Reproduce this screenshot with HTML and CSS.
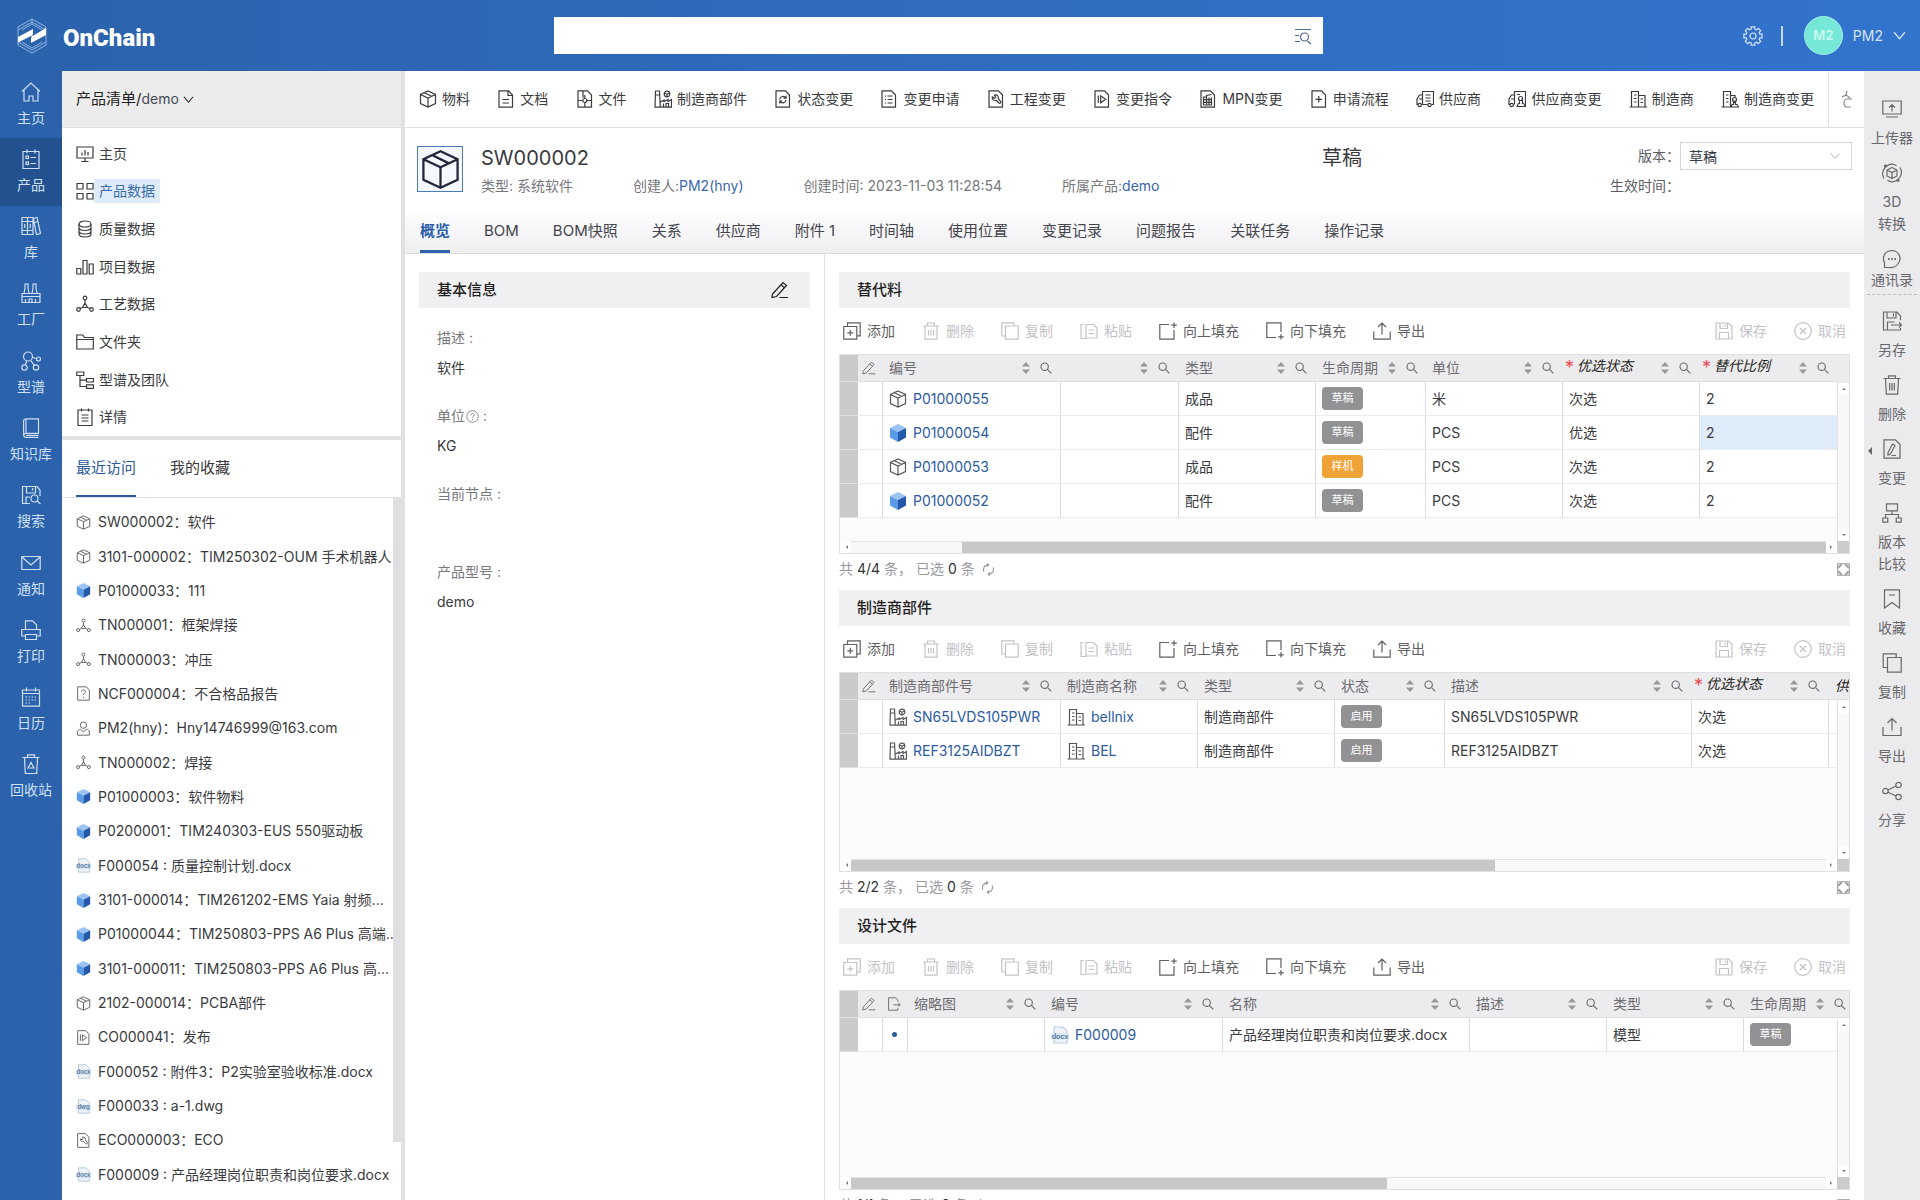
FILE: index.html
```html
<!DOCTYPE html>
<html lang="zh-CN">

<head>
  <meta charset="UTF-8" />
  <meta name="viewport" content="width=device-width, initial-scale=1.0" />
  <title>OnChain</title>
  <link rel="stylesheet" href="styles.css">
</head>

<body>
  <!-- 图标 -->
  <svg class="sprite" aria-hidden="true">
    <!-- 左侧主导航 -->
    <symbol id="i-home" viewBox="0 0 20 20"><path d="M1 9.500 10 1l9 8.500M3 8v11h5v-5h4v5h5V8" /></symbol>
    <symbol id="i-product" viewBox="0 0 20 20"><path d="M2 2.500h16v17H2zM6 .5v4M14 .5v4M9.500 8.500H15M9.500 14.500H15" /><rect x="5" y="7" width="2.500" height="2.500" /><rect x="5" y="13" width="2.500" height="2.500" /></symbol>
    <symbol id="i-books" viewBox="0 0 20 20"><path d="M1 1.500h5.500v17H1zM6.500 1.500H12v17H6.500zM12.300 2.500l3.700-1 3.500 16-4 1zM1 5.500h11M1 14.500h11M3.700 8v4M9.200 8v4M13.500 6.500l3.500-1" /></symbol>
    <symbol id="i-factory" viewBox="0 0 20 20"><path d="M1 10.500h18v9H1zM3 10.500 4 5V1h3v4l1 5.500M11 10.500 12 5V1h3v4l1 5.500M1 13.500h18M4.500 19.500v-3.500M8 19.500v-3.500h3v3.500M14.500 19.500v-3.500" /></symbol>
    <symbol id="i-genealogy" viewBox="0 0 20 20"><circle cx="7" cy="5.500" r="4.500" /><circle cx="17.500" cy="8" r="2" /><circle cx="3.500" cy="16.500" r="2.700" /><circle cx="15" cy="16.500" r="2.700" /><path d="m11.500 6.500 4 1M5.700 9.800l-1.300 4M9.500 9.300l4 5" /></symbol>
    <symbol id="i-book" viewBox="0 0 20 20"><path d="M5 .8h12.500v14.500H5c-3 0-3 4 0 4h12.500M2.600 17V3c0-1.500 1-2.200 2.400-2.200v14.500M5 17.300h12.500" /></symbol>
    <symbol id="i-findsave" viewBox="0 0 20 20"><path d="M9 18.500H1.500v-17H16L19 5v6M5.500 1.500V8h9V1.500M11.500 3v2.500M5 18.500v-6.500h4" /><circle cx="13.500" cy="13.500" r="3.500" /><path d="m16 16 3.500 3" /></symbol>
    <symbol id="i-mail" viewBox="0 0 20 20"><path d="M.8 3.500h18.400v13H.8zM1 4l9 8 9-8" /></symbol>
    <symbol id="i-print" viewBox="0 0 20 20"><path d="M4.500 9V.8h7l4 4V9M4 16H.8V9.500h18.400V16H16M4.500 14.500h11v5h-11z" /></symbol>
    <symbol id="i-calendar" viewBox="0 0 20 20"><path d="M1.500 3h17v16.200h-17zM1.500 6.500h17M5.500 .5v4M14.500 .5v4" /><path d="M4.500 10h11M4.500 13h11M4.500 16h6" stroke-dasharray="1.500 1.500" /></symbol>
    <symbol id="i-recycle" viewBox="0 0 20 20"><path d="M1.500 3.500h17M6.500 3.500V.8h7v2.700M3.500 3.500l.8 16h11.400l.8-16M10 8.500l3 5.500H7z" /></symbol>

    <!-- 目录树 -->
    <symbol id="i-board" viewBox="0 0 18 18"><path d="M1 2h16v11H1zM9 13v3.500M5.500 16.500h7M6 7.500v3M9 5v5.500M12 7v3.500" /></symbol>
    <symbol id="i-grid" viewBox="0 0 18 18"><path d="M1 1.500h6v5.500H1zM11 1.500h6v5.500h-6zM1 11.500h6V17H1zM11 11.500h6V17h-6z" /></symbol>
    <symbol id="i-db" viewBox="0 0 18 18"><ellipse cx="9" cy="4" rx="6" ry="3" /><path d="M3 4v10c0 4 12 4 12 0V4M3 7.500c0 4 12 4 12 0M3 11c0 4 12 4 12 0" /></symbol>
    <symbol id="i-bars" viewBox="0 0 18 18"><path d="M.8 10.500h4v5.500h-4zM7 2.500h4V16H7zM13.200 6h4v10h-4z" /></symbol>
    <symbol id="i-process" viewBox="0 0 18 18"><circle cx="9" cy="3" r="1.800" /><circle cx="2.500" cy="14.500" r="1.800" /><circle cx="15.500" cy="14.500" r="1.800" /><path d="M9 5v4M6.500 12.500 9 8l2.500 4.500zM6.500 12.500 4 13.500M11.500 12.500l2.500 1" /></symbol>
    <symbol id="i-folder" viewBox="0 0 18 18"><path d="M.8 16V2h6l1.500 2.500h9V16zM.8 6.500h16.400" /></symbol>
    <symbol id="i-hierarchy" viewBox="0 0 18 18"><path d="M.8 1h7v3.500h-7zM10.500 7.500h7V11h-7zM10.500 13.800h7v3.500h-7zM4 4.500v11h6.500M4 9.200h6.500" /></symbol>
    <symbol id="i-note" viewBox="0 0 18 18"><path d="M2 2h14v15.500H2zM5.500 .5v3M12.500 .5v3M5.500 7h7M5.500 10h7M5.500 13h7" /></symbol>

    <!-- 对象类型 -->
    <symbol id="i-cube" viewBox="0 0 18 18"><path d="M9 1 16.500 4.500v9L9 17l-7.500-3.500v-9zM1.500 4.500 9 8l7.500-3.500M9 8v9M5.500 2.700l7 3.500" /></symbol>
    <symbol id="i-blue" viewBox="0 0 18 18">
      <g stroke="none">
        <path d="M9 0 17 4 9 8 1 4z" fill="#9cc4f2" />
        <path d="M1 4 9 8v10l-8-4.500z" fill="#5a9be8" />
        <path d="M17 4 9 8v10l8-4.500z" fill="#2358ab" />
      </g>
    </symbol>
    <symbol id="i-ncf" viewBox="0 0 18 18"><path d="M2 1h10l4 3.500V17H2zM6.700 7c0-3 4.600-3 4.600-.3 0 2-2.300 1.800-2.300 4.300M9 13v1.500" /></symbol>
    <symbol id="i-user" viewBox="0 0 18 18"><circle cx="9" cy="5" r="3.800" /><path d="M2 17v-4c0-2 2-3 3.500-3L9 13l3.500-3c1.500 0 3.500 1 3.500 3v4z" /></symbol>
    <symbol id="i-docx" viewBox="0 0 18 18">
      <path d="M3 1h9l4 4v12H3z" fill="#eef3f8" stroke="#b9cbdc" />
      <rect x="0" y="7" width="18" height="6.500" fill="#dbe6f0" stroke="none" />
      <text x="9" y="12.500" class="ext">docx</text>
    </symbol>
    <symbol id="i-dwg" viewBox="0 0 18 18">
      <path d="M3 1h9l4 4v12H3z" fill="#eef3f8" stroke="#b9cbdc" />
      <rect x="0" y="7" width="18" height="6.500" fill="#dbe6f0" stroke="none" />
      <text x="9" y="12" class="ext">dwg</text>
    </symbol>

    <!-- 新建工具栏 -->
    <symbol id="i-doc" viewBox="0 0 18 18"><path d="M2 .8h9.500L15.500 5v12.200H2zM11 .8V5.500h4.500M5.500 9.500h6.500M5.500 13h6.500" /></symbol>
    <symbol id="i-file" viewBox="0 0 18 18"><path d="M2 .8h9.500L15.500 5v12.200H2zM7 .8v7M2 10.500h4.500M11 10.500h4.500M8.800 12.700v4.500M8.800 5v3.500" /><circle cx="8.800" cy="10.500" r="2" /></symbol>
    <symbol id="i-mpart" viewBox="0 0 18 18"><path d="M1 17.200 1.500 1h4l.8 16.200zM1.500 5h4M6 17.200h11.500V9.500L14 11.500v-2l-4 2v-1.500l-3.500 2M9.500 17v-3.500M12 17v-3.500h2.500V17" /><circle cx="13" cy="4" r="2.800" /><path d="m10.500 3 2.500 1.200 2.500-1.200M13 4.200v2.600" /></symbol>
    <symbol id="i-state" viewBox="0 0 18 18"><path d="M2 .8h9.500L15.500 5v12.200H2z" /><path d="M5.700 9.500c.3-3.500 4.500-4 6-1.500M12 9.800c-.3 3.500-4.500 4-6 1.500M12 5.800V8.200H9.500M5.700 13.500v-2.300h2.500" /></symbol>
    <symbol id="i-list" viewBox="0 0 18 18"><path d="M2 .8h9.500L15.500 5v12.200H2zM7.500 6h5M7.500 9.500h5M7.500 13h5M4.800 6h1.200M4.800 9.500h1.200M4.800 13h1.200" /></symbol>
    <symbol id="i-wrench" viewBox="0 0 18 18"><path d="M2 .8h9.500L15.500 5v12.200H2z" /><path d="M7.500 5c2.500-.8 4.500 1.500 3.700 3.500l2.500 3c.6 1.300-.8 2.300-1.800 1.500L9.300 10.300C7 11 4.800 9.500 5.300 7l2 1.300 1.300-1.200z" /></symbol>
    <symbol id="i-play" viewBox="0 0 18 18"><path d="M2 .8h9.500L15.500 5v12.200H2zM5.300 5.500v7.500M7.700 5.800v7l5-3.500z" /></symbol>
    <symbol id="i-mpn" viewBox="0 0 18 18"><path d="M2 .8h9.500L15.500 5v12.200H2zM4.500 15V7l3 0M7.500 15V5.500l5-1M12.500 7.500V15M4.500 15h8.500M4.500 9.700h8M4.500 12.300h8M10 7.500V15" /></symbol>
    <symbol id="i-newdoc" viewBox="0 0 18 18"><path d="M2 .8h9.500L15.500 5v12.200H2zM8.800 6v6.500M5.500 9.300h6.500" /></symbol>
    <symbol id="i-truck" viewBox="0 0 18 18"><path d="M6.500 14.500V1.500h11v13h-2M11.500 14.500H6M6.500 5H3.500L1 9v5.500h1M3 9h3.500M9.500 5h5M9.500 8h5M9.500 11h5" /><circle cx="3.700" cy="15" r="1.700" /><circle cx="13.500" cy="15" r="1.700" /></symbol>
    <symbol id="i-truckedit" viewBox="0 0 18 18"><path d="M6.500 14.500V1.500h11v15M6.500 5H3.500L1 9v5.500h1M3 9h3.500M9 4.500h3" /><circle cx="3.700" cy="15" r="1.700" /><circle cx="12.500" cy="8.500" r="2" /><path d="M9 16.500h8.500l-2-3h-1v-3h-3v3h-1z" /></symbol>
    <symbol id="i-building" viewBox="0 0 18 18"><path d="M2.500 17V1.500h7V17M9.500 5.500H16V17M.5 17h17.500M5 5h2.500M5 8.500h2.500M5 12h2.500M11.500 9h2.500M11.500 12.500h2.500" /></symbol>
    <symbol id="i-buildingedit" viewBox="0 0 18 18"><path d="M2.500 17V1.500h7V17M9.500 5.500H14V7M.5 17h9M5 5h2.500M5 8.500h2.500M5 12h2.500" /><circle cx="13.500" cy="9.500" r="2" /><path d="M10 17h7.500l-1.500-2.500h-1.500v-2h-2v2H11z" /></symbol>
    <symbol id="i-more" viewBox="0 0 18 18"><path d="M10 1 9 5 5 7M9 5l4 3M15 9h-5c-4 0-4 8 0 8h4" /></symbol>

    <!-- 表格操作 -->
    <symbol id="i-add" viewBox="0 0 18 18"><path d="M.8 4.500h13v12.700H.8zM4.500 4.500V.8h12.700v13h-3.400M7.300 7.800v6M4.300 10.800h6" /></symbol>
    <symbol id="i-trash" viewBox="0 0 18 18"><path d="M1 4h16M5.500 4V1h7v3M3 4v13.200h12V4M6.500 8v5.500M9 8v5.500M11.500 8v5.500" /></symbol>
    <symbol id="i-copy" viewBox="0 0 18 18"><path d="M4.500 4h12.700v13.200H4.500zM4.500 14H.8V.8H13V4" /></symbol>
    <symbol id="i-paste" viewBox="0 0 18 18"><path d="M6 2.500h7.500L17 6v10H6zM6 16.500H1v-14h2.500M8.500 8h5.500M8.500 11.500h5.500" /></symbol>
    <symbol id="i-fillup" viewBox="0 0 18 18"><path d="M10 2.500H.8v14.700H15V8M15 .5v5.500M12.300 3.200h5.500" /></symbol>
    <symbol id="i-filldown" viewBox="0 0 18 18"><path d="M10 15.500H.8V.8H15V10M15 12v5.500M12.300 14.800h5.500" /></symbol>
    <symbol id="i-export" viewBox="0 0 18 18"><path d="M.8 9.500v7.700h16.400V9.500M9 12.500V1.200M5 5l4-4 4 4" /></symbol>
    <symbol id="i-save" viewBox="0 0 18 18"><path d="M1 1h12.500L17 4.500V17H1zM5 1v5.500h7.500V1M4.500 17v-6.500h9V17M10 2.500V5" /></symbol>
    <symbol id="i-cancel" viewBox="0 0 18 18"><circle cx="9" cy="9" r="8.300" /><path d="m6 6 6 6M12 6l-6 6" /></symbol>
    <symbol id="i-edit" viewBox="0 0 18 18"><path d="M1.500 13 12 1.500l3.500 3L5.500 15.500 1 16.500zM10 3.700l3.500 3M8.500 16.500H17" /></symbol>
    <symbol id="i-out" viewBox="0 0 18 18"><path d="M14 6V4l-3-3H2v16h12v-3M8 10h9M14.500 7.500 17 10l-2.500 2.500" /></symbol>
    <symbol id="i-sort" viewBox="0 0 8 14"><path d="M4 1 8 5.500H0zM4 13l4-4.500H0z" fill="#98979a" stroke="none" /></symbol>
    <symbol id="i-search" viewBox="0 0 18 18"><circle cx="7" cy="7" r="5.500" stroke-width="1.700" /><path d="m11 11 6 6" stroke-width="1.700" /></symbol>
    <symbol id="i-refresh" viewBox="0 0 18 18"><path d="M2.500 12C1 6 4 2.500 9 2.500M15.500 6c1.500 6-1.500 9.500-6.500 9.500M7 .5l2.300 2L7 5M11 13l-2.300 2.500L11 17.500" stroke-width="1.600" /></symbol>
    <symbol id="i-expand" viewBox="0 0 14 14"><path d="M.8 .8h12.400v12.400H.8z" /><path d="M1.500 5 5 1.500M9 1.500 12.500 5M12.500 9 9 12.500M5 12.500 1.500 9" stroke-width="2" /></symbol>
    <symbol id="i-help" viewBox="0 0 18 18"><circle cx="9" cy="9" r="8" /><path d="M6.700 7.500c0-3.500 4.600-3.300 4.600-.5C11.300 9 9 8.700 9 10.800M9 12.500V14" /></symbol>
    <symbol id="i-down" viewBox="0 0 12 12"><path d="m1 3 5 6 5-6" /></symbol>

    <!-- 右侧操作栏 -->
    <symbol id="i-upload" viewBox="0 0 20 20"><path d="M.8 2h18.400v13H.8zM4 18h12M10 12.500V6M7 8.500 10 5.500l3 3" /></symbol>
    <symbol id="i-3d" viewBox="0 0 20 20"><path d="m10 4.500 5 2.500v6l-5 2.500L5 13V7zM5 7l5 2.500L15 7M10 9.500v6M2 15.500c-2.500-4-1.500-9 2-12 3.500-2.800 7.500-2.800 10.500-.8M18 4.500c2.500 4 1.500 9-2 12-3.500 2.800-7.500 2.800-10.500.8" /><circle cx="3.500" cy="3" r="1" fill="currentColor" /><circle cx="16" cy="17.300" r="1" fill="currentColor" /></symbol>
    <symbol id="i-chat" viewBox="0 0 20 20"><path d="M2.500 18.500v-5C0 9 2 2 9.500 1.500 17 1.500 20 9 16.500 14c-2 3.500-6 5-9 4.500z" /><path d="M6 10h1.500M9.200 10h1.500M12.400 10h1.500" stroke-width="2" /></symbol>
    <symbol id="i-saveas" viewBox="0 0 20 20"><path d="M18.500 9V5L15 1H1.500v18h17v-2M5 1v6h9V1M11.500 2.500v3M5.500 19v-8h7M9 14h10.500M17 11.500l2.500 2.500-2.500 2.500" /></symbol>
    <symbol id="i-trash2" viewBox="0 0 20 20"><path d="M1.500 3.500h17M6.500 3.500V.8h7v2.700M3.500 3.500l.8 15.700h11.400l.8-15.700M7.700 8v7.500M10 8v7.500M12.300 8v7.500" /></symbol>
    <symbol id="i-change" viewBox="0 0 20 20"><path d="M2 .8h11.500L18 5.500v13.700H2zM6 13.500 10.500 5l2.500 1.500L8.500 15 6 16zM9.500 16.500H14" /></symbol>
    <symbol id="i-compare" viewBox="0 0 20 20"><path d="M4.500 .8h11v7h-11zM.8 15h5v4.200h-5zM14.200 15h5v4.200h-5zM10 8v3.500M3.500 15v-3.500h13V15" /></symbol>
    <symbol id="i-mark" viewBox="0 0 20 20"><path d="M2.500 .8h15v18.200L10 13.500 2.500 19zM7 6h6" /></symbol>
    <symbol id="i-copy2" viewBox="0 0 20 20"><path d="M5.500 4.500h13.700v14.700H5.500zM5.500 14.500H1.200V.8h13v3.700" /></symbol>
    <symbol id="i-export2" viewBox="0 0 20 20"><path d="M1 10v8.500h18V10M10 13.500V1.500M5.500 6 10 1.500 14.500 6" /></symbol>
    <symbol id="i-share" viewBox="0 0 20 20"><circle cx="3.500" cy="10" r="2.700" /><circle cx="16.500" cy="4" r="2.700" /><circle cx="16.500" cy="16" r="2.700" /><path d="m6 9 8-4M6 11.200l8 3.800" /></symbol>
  </svg>

  <header class="header">
    <div class="brand">
      <svg class="brand-logo" viewBox="0 0 30 36" aria-hidden="true">
        <path d="M15 1 29 9v18l-14 8L1 27V9zM15 6l10 6M15 6 5 12M15 30l10-6M15 30 5 24M15 1v5M1 12l14-8 14 8M1 24l14 8 14-8" fill="none" stroke="#8fb4e3" stroke-width="1" />
        <path d="M1 19 16 11v5l-2 3 15-9v7l-15 8v-5l2-3-15 7.500z" fill="#fff" stroke="none" />
      </svg>
      <span class="brand-name">OnChain</span>
    </div>
    <form class="search">
      <input class="search-input" type="text" aria-label="搜索">
      <button class="search-btn" type="button" aria-label="高级搜索">
        <svg viewBox="0 0 18 18"><path d="M1 2.500h16M1 8.500h4M1 14.500h5M13.500 14l3.500 3" /><circle cx="10.500" cy="10" r="4" /></svg>
      </button>
    </form>
    <div class="account">
      <button class="gear" type="button" aria-label="设置">
        <svg viewBox="0 0 20 20"><circle cx="10" cy="10" r="3" /><path d="M8.200 3.200V.9h3.600v2.300l1.700.7 1.700-1.600 2.500 2.500-1.600 1.700.7 1.700h2.300v3.600h-2.300l-.7 1.700 1.600 1.700-2.500 2.500-1.700-1.600-1.700.7v2.300H8.200v-2.300l-1.700-.7-1.700 1.600-2.500-2.500 1.600-1.700-.7-1.700H.9V8.200h2.300l.7-1.700-1.600-1.700 2.500-2.500 1.700 1.600z" /></svg>
      </button>
      <span class="account-line"></span>
      <span class="avatar">M2</span>
      <button class="account-name" type="button">PM2 <svg viewBox="0 0 12 12"><use href="#i-down" /></svg></button>
    </div>
  </header>

  <div class="page">
    <nav class="nav">
      <div class="nav-list">
        <a href="#"><svg><use href="#i-home" /></svg>主页</a>
        <a href="#" class="active"><svg><use href="#i-product" /></svg>产品</a>
        <a href="#"><svg><use href="#i-books" /></svg>库</a>
        <a href="#"><svg><use href="#i-factory" /></svg>工厂</a>
        <a href="#"><svg><use href="#i-genealogy" /></svg>型谱</a>
        <a href="#"><svg><use href="#i-book" /></svg>知识库</a>
        <a href="#"><svg><use href="#i-findsave" /></svg>搜索</a>
        <a href="#"><svg><use href="#i-mail" /></svg>通知</a>
        <a href="#"><svg><use href="#i-print" /></svg>打印</a>
        <a href="#"><svg><use href="#i-calendar" /></svg>日历</a>
        <a href="#"><svg><use href="#i-recycle" /></svg>回收站</a>
      </div>
    </nav>

    <aside class="side">
      <button class="side-title" type="button">产品清单/<span>demo</span><svg viewBox="0 0 12 12"><use href="#i-down" /></svg></button>
      <nav class="tree">
        <a href="#"><svg><use href="#i-board" /></svg><span>主页</span></a>
        <a href="#" class="active"><svg><use href="#i-grid" /></svg><span>产品数据</span></a>
        <a href="#"><svg><use href="#i-db" /></svg><span>质量数据</span></a>
        <a href="#"><svg><use href="#i-bars" /></svg><span>项目数据</span></a>
        <a href="#"><svg><use href="#i-process" /></svg><span>工艺数据</span></a>
        <a href="#"><svg><use href="#i-folder" /></svg><span>文件夹</span></a>
        <a href="#"><svg><use href="#i-hierarchy" /></svg><span>型谱及团队</span></a>
        <a href="#"><svg><use href="#i-note" /></svg><span>详情</span></a>
      </nav>
      <div class="side-tabs">
        <button class="active" type="button">最近访问</button>
        <button type="button">我的收藏</button>
      </div>
      <div class="recent">
        <ul class="recent-list"></ul>
        <div class="recent-bar"></div>
      </div>
    </aside>

    <main class="main">
      <div class="create">
        <div class="create-list">
          <button type="button"><svg><use href="#i-cube" /></svg>物料</button>
          <button type="button"><svg><use href="#i-doc" /></svg>文档</button>
          <button type="button"><svg><use href="#i-file" /></svg>文件</button>
          <button type="button"><svg><use href="#i-mpart" /></svg>制造商部件</button>
          <button type="button"><svg><use href="#i-state" /></svg>状态变更</button>
          <button type="button"><svg><use href="#i-list" /></svg>变更申请</button>
          <button type="button"><svg><use href="#i-wrench" /></svg>工程变更</button>
          <button type="button"><svg><use href="#i-play" /></svg>变更指令</button>
          <button type="button"><svg><use href="#i-mpn" /></svg>MPN变更</button>
          <button type="button"><svg><use href="#i-newdoc" /></svg>申请流程</button>
          <button type="button"><svg><use href="#i-truck" /></svg>供应商</button>
          <button type="button"><svg><use href="#i-truckedit" /></svg>供应商变更</button>
          <button type="button"><svg><use href="#i-building" /></svg>制造商</button>
          <button type="button"><svg><use href="#i-buildingedit" /></svg>制造商变更</button>
        </div>
        <button class="create-more" type="button" aria-label="更多"><svg><use href="#i-more" /></svg></button>
      </div>

      <section class="record">
        <div class="record-icon"><svg viewBox="0 0 18 18"><use href="#i-cube" /></svg></div>
        <div class="record-info">
          <div class="record-title">
            <h1>SW000002</h1>
            <strong>草稿</strong>
          </div>
          <div class="record-meta">
            <span>类型: 系统软件</span>
            <span>创建人:<a href="#">PM2(hny)</a></span>
            <span>创建时间: 2023-11-03 11:28:54</span>
            <span>所属产品:<a href="#">demo</a></span>
          </div>
        </div>
        <div class="record-form">
          <label for="version">版本：</label>
          <div class="select">
            <select id="version">
              <option>草稿</option>
            </select>
            <svg viewBox="0 0 12 12"><use href="#i-down" /></svg>
          </div>
          <span>生效时间：</span>
        </div>
      </section>

      <nav class="tabs">
        <a href="#" class="active">概览</a>
        <a href="#">BOM</a>
        <a href="#">BOM快照</a>
        <a href="#">关系</a>
        <a href="#">供应商</a>
        <a href="#">附件 1</a>
        <a href="#">时间轴</a>
        <a href="#">使用位置</a>
        <a href="#">变更记录</a>
        <a href="#">问题报告</a>
        <a href="#">关联任务</a>
        <a href="#">操作记录</a>
      </nav>

      <div class="content">
        <section class="detail">
          <div class="card-title">
            <h2>基本信息</h2>
            <button type="button" aria-label="编辑"><svg><use href="#i-edit" /></svg></button>
          </div>
          <dl class="fields">
            <div><dt>描述 :</dt><dd>软件</dd></div>
            <div><dt>单位<svg><use href="#i-help" /></svg> :</dt><dd>KG</dd></div>
            <div><dt>当前节点 :</dt><dd></dd></div>
            <div><dt>产品型号 :</dt><dd>demo</dd></div>
          </dl>
        </section>
        <div class="grids"></div>
      </div>
    </main>

    <aside class="rail">
      <button type="button"><svg><use href="#i-upload" /></svg>上传器</button>
      <button type="button"><svg><use href="#i-3d" /></svg>3D<br>转换</button>
      <button type="button" class="tight"><svg><use href="#i-chat" /></svg>通讯录</button>
      <hr>
      <button type="button"><svg><use href="#i-saveas" /></svg>另存</button>
      <button type="button"><svg><use href="#i-trash2" /></svg>删除</button>
      <button type="button"><svg><use href="#i-change" /></svg>变更<i class="rail-arrow"></i></button>
      <button type="button"><svg><use href="#i-compare" /></svg>版本<br>比较</button>
      <button type="button"><svg><use href="#i-mark" /></svg>收藏</button>
      <button type="button"><svg><use href="#i-copy2" /></svg>复制</button>
      <button type="button"><svg><use href="#i-export2" /></svg>导出</button>
      <button type="button"><svg><use href="#i-share" /></svg>分享</button>
    </aside>
  </div>

  <script src="script.js"></script>
</body>

</html>
```
FILE: styles.css
```css
* {
  box-sizing: border-box;
}

body {
  margin: 0;
  height: 100vh;
  overflow: hidden;
  display: flex;
  flex-direction: column;
  font-family: "Inter", "Noto Sans CJK SC", sans-serif;
  font-size: 14px;
  line-height: 20px;
  color: #3a3a40;
  background: #fff;
}

a {
  color: inherit;
  text-decoration: none;
}

button {
  padding: 0;
  border: none;
  background: none;
  font: inherit;
  color: inherit;
  cursor: pointer;
}

h1,
h2,
ul,
dl,
dd {
  margin: 0;
  padding: 0;
  font-weight: 400;
}

svg {
  width: 18px;
  height: 18px;
  flex: none;
  display: block;
  fill: none;
  stroke: currentColor;
  stroke-width: 1.2;
}

.sprite {
  display: none;
}

.ext {
  font-size: 7px;
  font-weight: 700;
  text-anchor: middle;
  fill: #5d82a8;
  stroke: none;
}

/* 顶部 */
.header {
  height: 71px;
  flex: none;
  display: flex;
  align-items: center;
  padding-right: 14px;
  background: linear-gradient(90deg, #2b62ab, #2f6cbd 45%, #3273cd);
  color: #d5e5f9;
}

.brand {
  width: 554px;
  padding-left: 17px;
  display: flex;
  align-items: center;
  gap: 16px;
}

.brand-logo {
  width: 30px;
  height: 36px;
}

.brand-name {
  padding-top: 4px;
  font-family: "Roboto", "Noto Sans", sans-serif;
  font-size: 24px;
  font-weight: 900;
  line-height: 36px;
  color: #fff;
}

.search {
  flex: 0 1 769px;
  height: 37px;
  display: flex;
  background: #fff;
}

.search-input {
  flex: 1;
  min-width: 0;
  padding: 0 12px;
  border: none;
  outline: none;
  background: none;
  font: inherit;
}

.search-btn {
  padding: 0 11px;
  color: #4d6a91;
}

.account {
  margin-left: auto;
  display: flex;
  align-items: center;
}

.gear svg {
  width: 20px;
  height: 20px;
}

.account-line {
  width: 2px;
  height: 20px;
  margin: 0 21px 0 18px;
  background: #c5daf4;
}

.avatar {
  width: 39px;
  height: 39px;
  border: 1px solid #a9f0e6;
  border-radius: 50%;
  background: #76e8d7;
  color: #c9f8f0;
  font-size: 13px;
  font-weight: 600;
  line-height: 37px;
  text-align: center;
}

.account-name {
  margin-left: 10px;
  display: flex;
  align-items: center;
  gap: 10px;
}

.account-name svg {
  width: 13px;
  height: 13px;
}

.page {
  flex: 1;
  min-height: 0;
  display: flex;
}

/* 左侧主导航 */
.nav {
  width: 62px;
  flex: none;
  background: #2b62ab;
}

.nav-list {
  height: 740px;
  display: grid;
  grid-auto-rows: 1fr;
}

.nav-list a {
  display: flex;
  flex-direction: column;
  align-items: center;
  justify-content: center;
  gap: 6px;
  color: #cfe0f6;
}

.nav-list a.active {
  background: #245290;
}

.nav-list svg {
  width: 20px;
  height: 20px;
}

/* 目录 */
.side {
  width: 343px;
  flex: none;
  display: flex;
  flex-direction: column;
  border-right: 4px solid #e1e0e3;
}

.side-title {
  height: 57px;
  flex: none;
  display: flex;
  align-items: center;
  padding-left: 14px;
  border-bottom: 1px solid #dededf;
  background: #ececec;
  font-size: 15px;
  color: #222;
}

.side-title span {
  font-size: 14px;
  color: #444a55;
}

.side-title svg {
  width: 11px;
  height: 11px;
  margin-left: 4px;
}

.tree {
  height: 312px;
  flex: none;
  padding: 7px 0 0 14px;
  display: grid;
  grid-auto-rows: 1fr;
  border-bottom: 4px solid #e1e0e3;
}

.tree a {
  display: flex;
  align-items: center;
}

.tree span {
  padding: 2px 5px;
}

.tree a.active span {
  background: #deebf9;
  color: #3c6da9;
}

.side-tabs {
  height: 58px;
  flex: none;
  display: flex;
  gap: 34px;
  padding-left: 14px;
  border-bottom: 1px solid #e3e2e5;
  font-size: 15px;
}

.side-tabs button {
  border-bottom: 2px solid transparent;
}

.side-tabs .active {
  color: #2b5a9e;
  border-color: #2b5a9e;
}

.recent {
  flex: 1;
  min-height: 0;
  display: flex;
}

.recent-list {
  flex: 1;
  min-width: 0;
  height: 694px;
  padding: 7px 0 0 14px;
  display: grid;
  grid-auto-rows: 1fr;
  list-style: none;
}

.recent-list a {
  height: 100%;
  display: flex;
  align-items: center;
  gap: 7px;
  white-space: nowrap;
}

.recent-list svg {
  width: 15px;
  height: 15px;
  color: #6a6a6e;
}

.recent-bar {
  width: 8px;
  height: 644px;
  background: #dfdee1;
}

/* 主区域 */
.main {
  flex: 1;
  min-width: 0;
  display: flex;
  flex-direction: column;
}

.create {
  height: 57px;
  flex: none;
  display: flex;
  border-bottom: 1px solid #e0e0e2;
}

.create-list {
  flex: 1;
  min-width: 0;
  display: flex;
  justify-content: space-between;
  padding: 0 14px;
  overflow: hidden;
}

.create-list button {
  display: flex;
  align-items: center;
  gap: 5px;
  white-space: nowrap;
}

.create-more {
  width: 36px;
  padding-left: 8px;
  border-left: 1px solid #e0e0e2;
  color: #8a8a8e;
}

.record {
  height: 84px;
  flex: none;
  display: flex;
  padding: 14px 12px 0;
}

.record-icon {
  width: 46px;
  height: 46px;
  margin-top: 4px;
  display: flex;
  align-items: center;
  justify-content: center;
  border: 1px solid #4a7cc0;
  background: #f3f9fe;
}

.record-icon svg {
  width: 41px;
  height: 41px;
  color: #23263a;
  stroke-width: 1;
}

.record-info {
  flex: 1;
  min-width: 0;
  margin-left: 18px;
}

.record-title {
  display: flex;
  justify-content: space-between;
  font-size: 20px;
  line-height: 32px;
}

.record-title h1 {
  font-size: 20px;
}

.record-title strong {
  font-weight: 400;
}

.record-meta {
  display: flex;
  gap: 60px;
  line-height: 24px;
  color: #77777c;
  white-space: nowrap;
}

.record-meta a {
  color: #3a67ac;
}

.record-form {
  width: 490px;
  display: grid;
  grid-template-columns: 1fr 172px;
  grid-template-rows: 28px 24px;
  gap: 2px 0;
  color: #5c5c62;
  line-height: 28px;
  text-align: right;
}

.select {
  position: relative;
}

.select select {
  width: 100%;
  height: 28px;
  padding: 0 8px;
  appearance: none;
  border: 1px solid #d5d4d9;
  border-radius: 0;
  background: #fff;
  font: inherit;
  color: #333a48;
}

.select svg {
  position: absolute;
  top: 9px;
  right: 12px;
  width: 10px;
  height: 10px;
  color: #b5b5ba;
  pointer-events: none;
}

.tabs {
  height: 42px;
  flex: none;
  display: flex;
  gap: 34px;
  padding-left: 15px;
  border-bottom: 1px solid #dcdce0;
  background: linear-gradient(#fdfdfe, #efeef1);
  font-size: 15px;
  line-height: 37px;
  white-space: nowrap;
  color: #44454c;
}

.tabs .active {
  border-bottom: 3px solid #2f62ad;
  color: #2a5da9;
  font-weight: 600;
}

.content {
  flex: 1;
  min-height: 0;
  display: flex;
}

.detail {
  width: 420px;
  flex: none;
  padding: 18px 14px 0;
  border-right: 1px solid #dfdfe2;
}

.card-title {
  height: 36px;
  display: flex;
  align-items: center;
  justify-content: space-between;
  padding: 0 21px 0 18px;
  background: #f0eff1;
  color: #1f1f22;
}

.card-title h2 {
  font-size: 15px;
  font-weight: 500;
}

.fields {
  padding: 15px 18px;
}

.fields div {
  height: 78px;
  line-height: 30px;
}

.fields dt {
  display: flex;
  align-items: center;
  color: #77777c;
  white-space: pre;
}

.fields svg {
  width: 13px;
  height: 13px;
  margin-left: 1px;
}

.grids {
  flex: 1;
  min-width: 0;
  padding: 18px 14px 0;
  overflow: hidden;
}

/* 表格 */
.actions {
  height: 46px;
  display: flex;
  align-items: center;
  gap: 27px;
  padding: 0 4px;
  color: #5f5f64;
}

.actions button {
  display: flex;
  align-items: center;
  gap: 6px;
  white-space: nowrap;
}

.actions button:disabled {
  color: #c3c2c6;
}

.actions .push {
  margin-left: auto;
}

.grid {
  position: relative;
  height: 200px;
  display: flex;
  flex-direction: column;
  border: 1px solid #e0dfe2;
  background: #fbfafc;
}

.grid-view {
  flex: 1;
  min-height: 0;
  overflow: hidden;
  background: linear-gradient(#ecebed 28px, transparent 28px);
}

.grid table {
  table-layout: fixed;
  border-collapse: separate;
  border-spacing: 0;
}

.grid th {
  height: 27px;
  padding: 0 9px 0 6px;
  border-bottom: 1px solid #dddce0;
  background: #ecebed;
  font-weight: 400;
  color: #6c6c71;
  text-align: left;
}

.th {
  display: flex;
  align-items: center;
  gap: 10px;
  white-space: nowrap;
}

.th span {
  flex: 1;
  display: flex;
}

.th svg {
  width: 12px;
  height: 12px;
}

.th .sort {
  width: 8px;
  height: 14px;
}

.th em {
  color: #1d1d20;
}

.th .must {
  padding-right: 3px;
  font-size: 18px;
  line-height: 24px;
  font-style: normal;
  color: #ee4b55;
}

.grid .required {
  padding-left: 2px;
}

.grid td {
  height: 34px;
  padding: 0 6px;
  border-right: 1px solid #dcdbdf;
  border-bottom: 1px solid #ececef;
  background: #fff;
  white-space: nowrap;
}

.grid .gutter {
  border-right: none;
  border-bottom: 1px solid #e0dfe2;
  background: #cac9cc;
}

.grid .mark {
  padding: 0 4px;
}

.grid .mark svg {
  width: 14px;
  height: 14px;
}

.grid .chosen {
  background: #deebf9;
}

.cell {
  display: flex;
  align-items: center;
  gap: 6px;
}

.cell svg {
  color: #55565b;
}

.cell a {
  color: #2c5b9f;
}

.dot {
  display: block;
  width: 5px;
  height: 5px;
  margin-left: 5px;
  border-radius: 50%;
  background: #2c5b9f;
}

.tag {
  display: block;
  width: 41px;
  height: 23px;
  border-radius: 4px;
  background: #929194;
  color: #fff;
  font-size: 11px;
  line-height: 23px;
  text-align: center;
}

.tag.sample {
  background: #efa235;
}

.vbar {
  position: absolute;
  top: 28px;
  right: 0;
  bottom: 12px;
  width: 12px;
  display: flex;
  flex-direction: column;
  justify-content: space-between;
  border-left: 1px solid #dfdee2;
  background: #f8f7f9;
}

.arrow {
  width: 11px;
  height: 12px;
  flex: none;
  display: flex;
  align-items: center;
  justify-content: center;
  background: #fff;
}

.arrow::before {
  content: "";
  border: 2px solid transparent;
}

.arrow.up::before {
  border-bottom-color: #777;
  margin-top: -2px;
}

.arrow.down::before {
  border-top-color: #777;
  margin-top: 2px;
}

.arrow.left::before {
  border-right-color: #777;
}

.arrow.right::before {
  border-left-color: #777;
}

.hbar {
  height: 12px;
  flex: none;
  display: flex;
  padding-right: 12px;
  background: #cccbce;
}

.track {
  flex: 1;
  border-top: 1px solid #e3e2e6;
  background: #f8f7f9;
}

.thumb {
  height: 100%;
  background: #c8c7ca;
}

.grid-foot {
  height: 36px;
  display: flex;
  align-items: center;
  padding-bottom: 6px;
  color: #98989d;
  white-space: pre;
}

.grid-foot b {
  font-weight: 400;
  color: #333338;
}

.grid-foot button svg {
  width: 13px;
  height: 13px;
}

.grid-foot button {
  margin-left: 7px;
}

.grid-foot .full {
  margin-left: auto;
}

/* 右侧操作栏 */
.rail {
  width: 56px;
  flex: none;
  padding-top: 28px;
  display: flex;
  flex-direction: column;
  align-items: center;
  gap: 14px;
  background: #ebeaec;
  color: #68686d;
}

.rail button {
  position: relative;
  width: 100%;
  display: block;
  line-height: 22px;
}

.rail svg {
  width: 20px;
  height: 20px;
  margin: 0 auto 8px;
}

.rail .tight svg {
  margin-bottom: 0;
}

.rail hr {
  width: 50px;
  margin: -11px 0 2px;
  border: none;
  border-top: 1px dashed #bdbcc0;
}

.rail-arrow {
  position: absolute;
  top: 8px;
  left: 0;
  border: 4px solid transparent;
  border-right-color: #68686d;
}
```
FILE: script.js
```js
const icon = (name, cls = '') => `<svg class="${cls}"><use href="#i-${name}" /></svg>`

// 最近访问
const recent = [
  ['cube', 'SW000002：软件'],
  ['cube', '3101-000002：TIM250302-OUM 手术机器人'],
  ['blue', 'P01000033：111'],
  ['process', 'TN000001：框架焊接'],
  ['process', 'TN000003：冲压'],
  ['ncf', 'NCF000004：不合格品报告'],
  ['user', 'PM2(hny)：Hny14746999@163.com'],
  ['process', 'TN000002：焊接'],
  ['blue', 'P01000003：软件物料'],
  ['blue', 'P0200001：TIM240303-EUS 550驱动板'],
  ['docx', 'F000054 : 质量控制计划.docx'],
  ['blue', '3101-000014：TIM261202-EMS Yaia 射频...'],
  ['blue', 'P01000044：TIM250803-PPS A6 Plus 高端...'],
  ['blue', '3101-000011：TIM250803-PPS A6 Plus 高...'],
  ['cube', '2102-000014：PCBA部件'],
  ['play', 'CO000041：发布'],
  ['docx', 'F000052 : 附件3：P2实验室验收标准.docx'],
  ['dwg', 'F000033 : a-1.dwg'],
  ['wrench', 'ECO000003：ECO'],
  ['docx', 'F000009 : 产品经理岗位职责和岗位要求.docx'],
]

document.querySelector('.recent-list').innerHTML = recent
  .map(([type, text]) => `<li><a href="#">${icon(type)}<span>${text}</span></a></li>`)
  .join('')

// 单元格内容
const link = (type, text) => `<div class="cell">${icon(type)}<a href="#">${text}</a></div>`
const tag = (text, cls = '') => `<span class="tag ${cls}">${text}</span>`

const grids = [
  {
    title: '替代料',
    canAdd: true,
    count: '4/4',
    cols: [['编号', 178], ['', 118], ['类型', 137], ['生命周期', 110], ['单位', 137], ['优选状态', 137, true], ['替代比例', 138, true]],
    rows: [
      [link('cube', 'P01000055'), '', '成品', tag('草稿'), '米', '次选', '2'],
      [link('blue', 'P01000054'), '', '配件', tag('草稿'), 'PCS', '优选', '2'],
      [link('cube', 'P01000053'), '', '成品', tag('样机', 'sample'), 'PCS', '次选', '2'],
      [link('blue', 'P01000052'), '', '配件', tag('草稿'), 'PCS', '次选', '2'],
    ],
    chosen: [1, 6],
    thumb: [11.4, 88.6],
  },
  {
    title: '制造商部件',
    canAdd: true,
    count: '2/2',
    cols: [['制造商部件号', 178], ['制造商名称', 137], ['类型', 137], ['状态', 110], ['描述', 247], ['优选状态', 137, true], ['供应商', 137, false, true]],
    rows: [
      [link('mpart', 'SN65LVDS105PWR'), link('building', 'bellnix'), '制造商部件', tag('启用'), 'SN65LVDS105PWR', '次选', ''],
      [link('mpart', 'REF3125AIDBZT'), link('building', 'BEL'), '制造商部件', tag('启用'), 'REF3125AIDBZT', '次选', ''],
    ],
    thumb: [0, 66],
  },
  {
    title: '设计文件',
    canAdd: false,
    out: true,
    count: '1/1',
    cols: [['缩略图', 137], ['编号', 178], ['名称', 247], ['描述', 137], ['类型', 137], ['生命周期', 110]],
    rows: [
      ['', link('docx', 'F000009'), '产品经理岗位职责和岗位要求.docx', '', '模型', tag('草稿')],
    ],
    thumb: [0, 55],
  },
]

// 表头
function head([label, , required, italic]) {
  const text = required ? `<em class="must">*</em><em>${label}</em>` : italic ? `<em>${label}</em>` : label
  return `<th class="${required ? 'required' : ''}"><div class="th"><span>${text}</span>${icon('sort', 'sort')}${icon('search')}</div></th>`
}

function render(g) {
  const widths = [18, 25, ...(g.out ? [25] : []), ...g.cols.map(c => c[1])]
  const total = widths.reduce((a, b) => a + b, 0)
  const rows = g.rows.map((r, y) => {
    const cells = r.map((c, x) => `<td class="${g.chosen && g.chosen[0] === y && g.chosen[1] === x ? 'chosen' : ''}">${c}</td>`)
    return `<tr><td class="gutter"></td><td></td>${g.out ? '<td class="mark"><i class="dot"></i></td>' : ''}${cells.join('')}</tr>`
  })
  const off = g.canAdd ? '' : 'disabled'

  return `
    <section>
      <div class="card-title"><h2>${g.title}</h2></div>
      <div class="actions">
        <button type="button" ${off}>${icon('add')}添加</button>
        <button type="button" disabled>${icon('trash')}删除</button>
        <button type="button" disabled>${icon('copy')}复制</button>
        <button type="button" disabled>${icon('paste')}粘贴</button>
        <button type="button">${icon('fillup')}向上填充</button>
        <button type="button">${icon('filldown')}向下填充</button>
        <button type="button">${icon('export')}导出</button>
        <button type="button" class="push" disabled>${icon('save')}保存</button>
        <button type="button" disabled>${icon('cancel')}取消</button>
      </div>
      <div class="grid">
        <div class="grid-view">
          <table style="width: ${total}px">
            <colgroup>${widths.map(w => `<col style="width: ${w}px">`).join('')}</colgroup>
            <thead>
              <tr>
                <th class="gutter"></th>
                <th class="mark">${icon('edit')}</th>
                ${g.out ? `<th class="mark">${icon('out')}</th>` : ''}
                ${g.cols.map(head).join('')}
              </tr>
            </thead>
            <tbody>${rows.join('')}</tbody>
          </table>
        </div>
        <div class="hbar">
          <span class="arrow left"></span>
          <div class="track"><div class="thumb" style="margin-left: ${g.thumb[0]}%; width: ${g.thumb[1]}%"></div></div>
          <span class="arrow right"></span>
        </div>
        <div class="vbar"><span class="arrow up"></span><span class="arrow down"></span></div>
      </div>
      <div class="grid-foot">共 <b>${g.count}</b> 条， 已选 <b>0</b> 条<button type="button" aria-label="刷新">${icon('refresh')}</button><button type="button" class="full" aria-label="全屏">${icon('expand')}</button></div>
    </section>`
}

document.querySelector('.grids').innerHTML = grids.map(render).join('')
```
